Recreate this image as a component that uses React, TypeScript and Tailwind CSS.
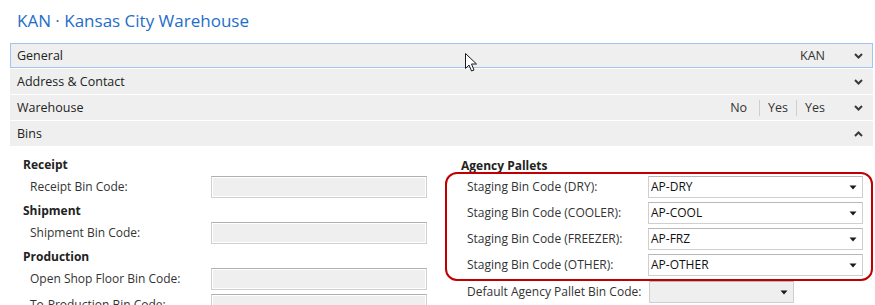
import React from "react";

const Chevron = ({ up = false }: { up?: boolean }) => (
  <svg width="9" height="6" viewBox="0 0 9 6" className="block">
    <polyline
      points={up ? "1,5 4.5,1.5 8,5" : "1,1 4.5,4.5 8,1"}
      fill="none"
      stroke="#3a3a3a"
      strokeWidth="2"
    />
  </svg>
);

const Tri = () => (
  <svg width="8" height="5" viewBox="0 0 8 5" className="block">
    <polygon points="0.5,0.5 7.5,0.5 4,4.5" fill="#1a1a1a" />
  </svg>
);

const Header = ({
  title,
  right,
  up = false,
  active = false,
}: {
  title: string;
  right?: React.ReactNode;
  up?: boolean;
  active?: boolean;
}) => (
  <div
    className={
      "h-[25px] flex items-center bg-[#efefef] pl-[6px] pt-px text-[#222] text-[12.5px] " +
      (active ? "border border-[#9fc5f0]" : "border border-[#efefef]")
    }
  >
    <span className="flex-1">{title}</span>
    <div className="flex items-center">{right}</div>
    <div className="w-[47px] flex justify-end pr-[9px]">
      <Chevron up={up} />
    </div>
  </div>
);

const EmptyBox = () => (
  <div className="w-[216px] h-[22px] border border-[#d0d0d0] border-t-[#b0b0b0] bg-white p-px">
    <div className="w-full h-full bg-[#efefef]" />
  </div>
);

const Select = ({ value, w = "w-[215px]", gray = false }: { value: string; w?: string; gray?: boolean }) => (
  <div
    className={
      w +
      " h-[22px] border border-[#cfcfcf] border-t-[#b8b8b8] flex items-center pl-[2px] pr-[5px] " +
      (gray ? "bg-[#efefef]" : "bg-white")
    }
  >
    <span className="flex-1 text-[#111]">{value}</span>
    <Tri />
  </div>
);

export default function App() {
  return (
    <div
      className="w-[875px] h-[305px] overflow-hidden bg-white relative text-[12px] leading-none"
      style={{ fontFamily: '"Open Sans", "Noto Sans", sans-serif' }}
    >
      <div className="h-[43px] pl-[17px] pt-[10px] text-[17px] leading-[22px] text-[#1e6ec8]">
        KAN · Kansas City Warehouse
      </div>

      <div className="ml-[10px] mr-[2px] flex flex-col gap-px">
        <Header title="General" active right={<span className="text-[#333]">KAN</span>} />
        <Header title="Address & Contact" />
        <Header
          title="Warehouse"
          right={
            <div className="flex items-center text-[#333]">
              <span className="pr-[12px]">No</span>
              <span className="w-px h-[16px] bg-[#cfcfcf]" />
              <span className="px-[8px]">Yes</span>
              <span className="w-px h-[16px] bg-[#cfcfcf]" />
              <span className="pl-[8px]">Yes</span>
            </div>
          }
        />
        <Header title="Bins" up />
      </div>

      <div className="flex pt-[9px] text-[#333]">
        {/* left column */}
        <div className="ml-[23px] w-[404px] flex flex-col">
          <div className="h-[20px] flex items-center font-bold text-[#222]">Receipt</div>
          <div className="mt-px h-[22px] flex items-center">
            <span className="w-[188px] pl-[7px]">Receipt Bin Code:</span>
            <EmptyBox />
          </div>
          <div className="mt-[3px] h-[20px] flex items-center font-bold text-[#222]">Shipment</div>
          <div className="mt-px h-[22px] flex items-center">
            <span className="w-[188px] pl-[7px]">Shipment Bin Code:</span>
            <EmptyBox />
          </div>
          <div className="mt-[3px] h-[20px] flex items-center font-bold text-[#222]">Production</div>
          <div className="mt-px h-[22px] flex items-center">
            <span className="w-[188px] pl-[7px]">Open Shop Floor Bin Code:</span>
            <EmptyBox />
          </div>
          <div className="mt-[4px] h-[22px] flex items-center">
            <span className="w-[188px] pl-[7px]">To-Production Bin Code:</span>
            <EmptyBox />
          </div>
        </div>

        {/* right column */}
        <div className="ml-[18px] w-[428px] flex flex-col">
          <div className="h-[17px] pl-[16px] pt-[4px] font-bold text-[#222] leading-[13px]">Agency Pallets</div>
          <div className="border-2 border-[#c00000] rounded-[12px] pl-[20px] pr-[7px] pt-[2px] pb-[3px] flex flex-col gap-[4px]">
            {[
              ["Staging Bin Code (DRY):", "AP-DRY"],
              ["Staging Bin Code (COOLER):", "AP-COOL"],
              ["Staging Bin Code (FREEZER):", "AP-FRZ"],
              ["Staging Bin Code (OTHER):", "AP-OTHER"],
            ].map(([l, v]) => (
              <div key={l} className="h-[22px] flex items-center">
                <span className="w-[181px]">{l}</span>
                <Select value={v} />
              </div>
            ))}
          </div>
          <div className="h-[22px] flex items-center pl-[22px]">
            <span className="w-[182px]">Default Agency Pallet Bin Code:</span>
            <Select value="" w="w-[145px]" gray />
          </div>
        </div>
      </div>

      {/* mouse cursor */}
      <svg className="absolute left-[465px] top-[53px]" width="14" height="20" viewBox="0 0 14 20">
        <polygon
          points="0.5,0.5 0.5,15.5 4,12 6.5,18 9,17 6.5,11 11.5,11"
          fill="white"
          stroke="#1a1a1a"
          strokeWidth="1"
          strokeLinejoin="miter"
        />
      </svg>
    </div>
  );
}
